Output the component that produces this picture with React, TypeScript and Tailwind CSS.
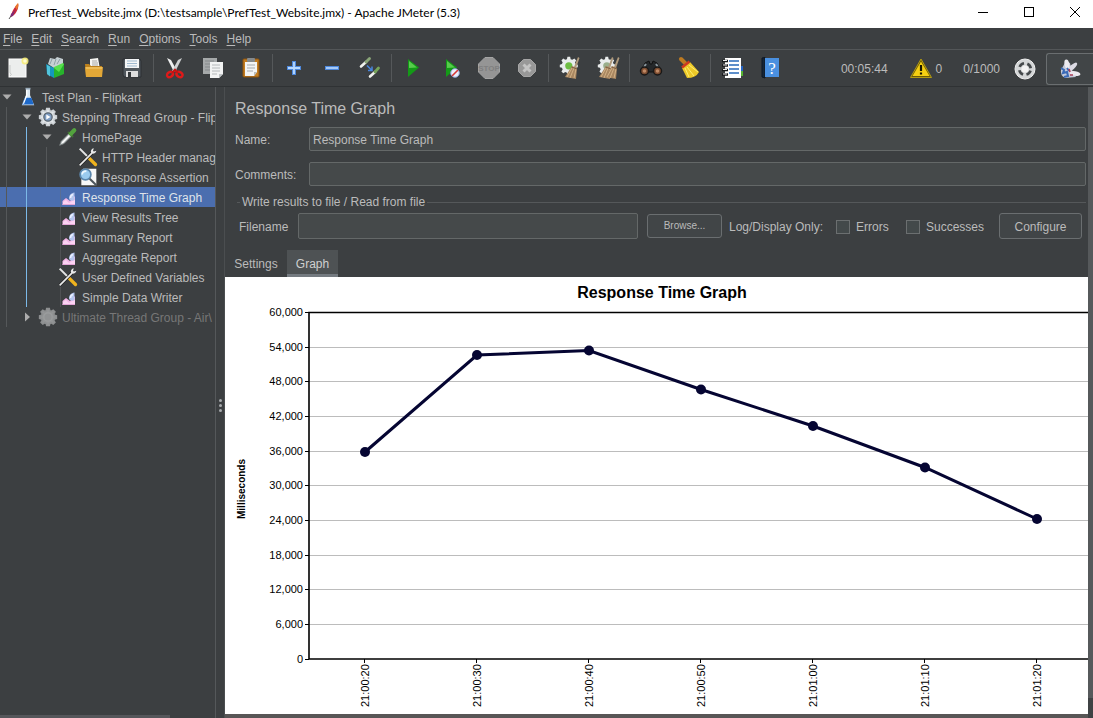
import React from "react";

type IconProps = { className?: string };
const Svg = ({ children, className = "size-6" }: { children: React.ReactNode; className?: string }) => (
  <svg viewBox="0 0 24 24" className={`shrink-0 ${className}`} fill="none" aria-hidden="true">
    {children}
  </svg>
);

const Feather = () => (
  <svg viewBox="0 0 16 20" className="h-5 w-4" fill="none" aria-hidden="true">
    <path d="M12 2 C13 3 12 9 8 13 L5 15 C5 11 8 5 12 2Z" fill="#c9283c" />
    <path d="M12 1 C13 2 12 5 11 8 L9 5 C10 3 11 2 12 1Z" fill="#e8782c" />
    <path d="M9 8 L7 14 L4 15 L5 12Z" fill="#7a2a78" />
    <path d="M5 14 L3 17" stroke="#555" />
  </svg>
);

const NewIcon = () => (
  <Svg>
    <rect x="3" y="3" width="17" height="18" fill="#eceeed" stroke="#fff" />
    <path d="M4 9v8q3 1 0 3" stroke="#c9cccb" />
    <circle cx="19" cy="5" r="3.5" fill="#f6ec7a" opacity=".9" />
    <circle cx="19" cy="5" r="1.8" fill="#fffbd0" />
  </Svg>
);
const TemplatesIcon = () => (
  <Svg>
    <path d="M4 8 L6 2 L11 3 L13 1 L19 3 L19 9 L10 12Z" fill="#c6d0d4" />
    <path d="M8 3l-2 5M12 3l-2 6M16 3l-3 5" stroke="#8fa0a7" />
    <path d="M2 8 L10 12 L10 22 L3 18Z" fill="#1597bd" />
    <path d="M3 9l3 1.5v10L3 18z" fill="#51c4dc" />
    <path d="M10 12 L20 8 L20 18 L10 22Z" fill="#27b32c" />
    <path d="M10 12l5 4 5-8-1-1-9 4z" fill="#58df4d" />
  </Svg>
);
const OpenIcon = () => (
  <Svg>
    <path d="M8 3 L16 2 L18 13 H8Z" fill="#f5f5f2" />
    <path d="M10 5h5M10 7h6M10 9h6" stroke="#a9a9a5" />
    <path d="M3 8 H7 L9 10 H20 V20 H4Z" fill="#bd811d" />
    <path d="M3 11 H21 L20 21 H4Z" fill="#e3a837" />
    <path d="M4 12H20" stroke="#f7cf77" />
  </Svg>
);
const SaveIcon = () => (
  <Svg>
    <path d="M3 3 H20 L21 5 V21 H4 L3 19Z" fill="#50575d" stroke="#2c3034" />
    <rect x="5" y="3" width="14" height="9" fill="#f4f6f7" />
    <path d="M7 5h10M7 7.5h10M7 10h10" stroke="#9eb9cf" />
    <rect x="6" y="15" width="12" height="6" fill="#dedede" />
    <rect x="8" y="16" width="3" height="5" fill="#34383b" />
  </Svg>
);
const CutIcon = () => (
  <Svg>
    <path d="M4 2 L8 4 L14 15 L11 16Z" fill="#f0f1f1" />
    <path d="M19 2 L15 4 L9 15 L12 16Z" fill="#cfd2d3" />
    <ellipse cx="7" cy="18.5" rx="3.2" ry="2.4" stroke="#de1a1a" strokeWidth="2.4" transform="rotate(-35 7 18.5)" />
    <ellipse cx="16.5" cy="18.5" rx="3.2" ry="2.4" stroke="#de1a1a" strokeWidth="2.4" transform="rotate(35 16.5 18.5)" />
    <path d="M9 17l3-3 3 3" stroke="#c41212" strokeWidth="2.4" />
  </Svg>
);
const CopyIcon = () => (
  <Svg>
    <rect x="2" y="2" width="14" height="16" fill="#a6a9aa" />
    <path d="M4 5h9M4 8h9M4 11h9M4 14h9" stroke="#85898b" />
    <path d="M9 6 H22 V18 L18 22 H9Z" fill="#f2f3f3" />
    <path d="M11 9h8M11 12h8M11 15h8M11 18h5" stroke="#b4b8ba" />
    <path d="M22 18h-4v4z" fill="#bfc3c5" />
  </Svg>
);
const PasteIcon = () => (
  <Svg>
    <rect x="4" y="3" width="16" height="18" rx="1" fill="#c27c20" stroke="#8d5410" />
    <path d="M6 6 H18 V16 L15 20 H6Z" fill="#f3f4f4" />
    <rect x="8" y="2" width="8" height="4" rx="1" fill="#868a8c" />
    <path d="M8 9h8M8 12h8M8 15h6" stroke="#a6aaad" />
    <path d="M18 16h-3v4z" fill="#babdbd" />
  </Svg>
);
const PlusIcon = () => (
  <Svg>
    <path d="M12 5v14M5 12h14" stroke="#4d88dc" strokeWidth="4" />
    <path d="M12 6v12M6 12h12" stroke="#b9daff" strokeWidth="1.8" />
  </Svg>
);
const MinusIcon = () => (
  <Svg>
    <path d="M5 12h14" stroke="#4d88dc" strokeWidth="4" />
    <path d="M6 12h12" stroke="#b0d2fa" strokeWidth="1.8" />
  </Svg>
);
const ToggleIcon = () => (
  <Svg>
    <path d="M3 10.5 L8 6" stroke="#f1f3ef" strokeWidth="2.6" strokeLinecap="round" />
    <path d="M8 6 L11.5 2.5" stroke="#8aa678" strokeWidth="2.8" strokeLinecap="round" />
    <path d="M12 20.5 L17 16" stroke="#f1f3ef" strokeWidth="2.6" strokeLinecap="round" />
    <path d="M17 16 L20.5 12" stroke="#77a45b" strokeWidth="2.8" strokeLinecap="round" />
    <path d="M9 9.5l4.5 4.5M14 10.5v4h-4" stroke="#4885dc" strokeWidth="1.5" />
  </Svg>
);
const PlayIcon = ({ blocked = false }: { blocked?: boolean }) => (
  <Svg>
    <path d="M7 3 L18 11.5 L7 21Z" fill="#149a17" />
    <path d="M8 5 L16 11.5 L8 12Z" fill="#57cc4c" />
    {blocked && (
      <>
        <circle cx="16" cy="17" r="4.3" fill="#e9eefb" stroke="#8aa2d6" />
        <path d="M13 20l6-6" stroke="#d53535" strokeWidth="1.6" />
      </>
    )}
  </Svg>
);
const StopIcon = () => (
  <Svg>
    <path d="M8 1.5 H16 L22.5 8 V16 L16 22.5 H8 L1.5 16 V8Z" fill="#959595" stroke="#a4a4a4" />
    <text x="12" y="15" textAnchor="middle" fontSize="8" fontWeight="700" fontFamily="Liberation Sans, sans-serif" fill="#808080">
      STOP
    </text>
  </Svg>
);
const ShutdownIcon = () => (
  <Svg>
    <path d="M8.5 3.5 H15.5 L20.5 8.5 V15.5 L15.5 20.5 H8.5 L3.5 15.5 V8.5Z" fill="#989898" stroke="#a6a6a6" />
    <path d="M8.5 8.5l7 7M15.5 8.5l-7 7" stroke="#c4c4c4" strokeWidth="3" />
  </Svg>
);
const gearPath =
  "M10.5 2h3l.6 2.6 1.8.8 2.3-1.4 2 2-1.4 2.3.8 1.8 2.4.6v3l-2.4.6-.8 1.8 1.4 2.3-2 2-2.3-1.4-1.8.8-.6 2.2h-3l-.6-2.2-1.8-.8-2.3 1.4-2-2 1.4-2.3-.8-1.8L2 13.7v-3l2.4-.6.8-1.8L3.8 6l2-2 2.3 1.4 1.8-.8z";
const Broom = ({ x = 0 }: { x?: number }) => (
  <g transform={`translate(${x} 0)`}>
    <path d="M20 1 L21.5 2 L18 12 L16 11Z" fill="#b09a7c" />
    <path d="M14 10 L19 12 L18 23 L7 21Z" fill="#a98761" />
    <path d="M14 12l-5 9M16 12l-4 10M18 13l-2 9" stroke="#d2b186" />
    <path d="M13.5 11l5.5 2" stroke="#806042" />
  </g>
);
const ClearIcon = ({ all = false }: { all?: boolean }) => (
  <Svg>
    <g transform="translate(0 -1) scale(.9)">
      <path d={gearPath} fill="#e9ecec" />
      <circle cx="12" cy="12" r="4" fill={all ? "#9aae8c" : "#6ebd43"} />
    </g>
    {all && <Broom x={-4} />}
    <Broom x={all ? 2 : 0} />
  </Svg>
);
const SearchIcon = () => (
  <Svg>
    <path d="M6 7 L10 5 L11 8 H13 L14 5 L18 7 L22 15 L14 16 H10 L2 15Z" fill="#25282a" stroke="#111" />
    <path d="M5 11l2-3M19 11l-2-3" stroke="#8a969d" strokeWidth="2" />
    <circle cx="5.5" cy="15" r="4" fill="#7c4c30" stroke="#181818" strokeWidth="1.5" />
    <circle cx="18.5" cy="15" r="4" fill="#7c4c30" stroke="#181818" strokeWidth="1.5" />
    <circle cx="5.5" cy="15" r="1.8" fill="#c08a66" />
    <circle cx="18.5" cy="15" r="1.8" fill="#c08a66" />
  </Svg>
);
const ResetIcon = () => (
  <Svg>
    <path d="M4 3 L9 8" stroke="#bd7a21" strokeWidth="4" strokeLinecap="round" />
    <path d="M5 12 L13 6 L22 16 Q19 22 10 22Z" fill="#edc928" />
    <path d="M8 12l4 9M10 11l7 9M12 9l9 7" stroke="#fff06f" />
    <path d="M5 11.5 L12.5 5.5" stroke="#ce3b20" strokeWidth="2.6" />
  </Svg>
);
const LogIcon = () => (
  <Svg>
    <rect x="5" y="2" width="16" height="20" fill="#fff" />
    <path d="M9 5h10M9 9h10M9 13h10M9 17h10" stroke="#286ab9" strokeWidth="1.5" />
    <path d="M2 5h6M2 9.5h6M2 14h6M2 18.5h6" stroke="#17191b" strokeWidth="2.4" />
    <path d="M3 4.5h4M3 9h4M3 13.5h4M3 18h4" stroke="#e8e8e8" />
    <path d="M21 10h2v5h-2z" fill="#2464c4" />
    <path d="M21 15h2v5h-2z" fill="#54b332" />
  </Svg>
);
const HelpIcon = () => (
  <Svg>
    <path d="M4 2 L7 1.5 V22 L4 21Z" fill="#172637" stroke="#0d1724" />
    <rect x="7" y="2" width="14" height="19" fill="#4a90e0" />
    <text x="14" y="18" textAnchor="middle" fontSize="17" fontFamily="Liberation Serif, serif" fill="#fff">
      ?
    </text>
  </Svg>
);
const WarningIcon = () => (
  <Svg>
    <path d="M12 2 L22.5 20.5 H1.5Z" fill="#6b5a05" stroke="#b29a14" strokeLinejoin="round" />
    <path d="M12 4.5 L20.5 19 H3.5Z" fill="#f5cf12" />
    <path d="M12 8v6M12 15.5v2" stroke="#181600" strokeWidth="2.2" />
  </Svg>
);
const ThreadsIcon = () => (
  <Svg>
    <circle cx="12" cy="12" r="10" fill="#d4d6d7" stroke="#f0f0f0" />
    <circle cx="12" cy="12" r="5.8" stroke="#45494b" strokeWidth="2.6" strokeDasharray="5.6 3.51" strokeDashoffset="-1.755" />
    <circle cx="12" cy="12" r="3.5" fill="#f3f3f3" />
  </Svg>
);
const PluginsIcon = () => (
  <Svg>
    <path d="M3 13 Q2 18 7 21 L18 20 L15 15 L13 11 L12 6 L8 4Z" fill="#c3c9da" />
    <ellipse cx="9" cy="7.5" rx="2.4" ry="5" fill="#eceaf0" transform="rotate(-12 9 7.5)" />
    <ellipse cx="14.5" cy="10" rx="2.3" ry="6" fill="#dcdbe4" transform="rotate(48 14.5 10)" />
    <ellipse cx="17" cy="16.5" rx="2.3" ry="5.5" fill="#ece9ef" transform="rotate(100 17 16.5)" />
    <path d="M3 11l3 2-1 3 4-1 1 4-4 1M9 11l2 3" stroke="#3b6bb8" strokeWidth="2" />
    <path d="M11 12l1 3M12 18h3" stroke="#ad3f58" strokeWidth="1.6" />
  </Svg>
);

const FlaskIcon = () => (
  <Svg className="size-5">
    <path d="M9.5 2h5v8l5 12H4.5l5-12z" fill="#dce8f2" />
    <path d="M8 13h8l3 8H5z" fill="#1d69ca" />
    <path d="M10.5 3v7l-4 10" stroke="#fff" strokeWidth="1.5" />
    <path d="M9 2h6" stroke="#97a9b8" strokeWidth="2" />
  </Svg>
);
const GearIcon = ({ dim = false }: { dim?: boolean }) => (
  <Svg className="size-5">
    <path d={gearPath} fill={dim ? "#939596" : "#e3e7ea"} stroke={dim ? "#8d8f90" : "#cdd2d6"} strokeWidth="2" />
    <circle cx="12" cy="12" r="5" fill={dim ? "#909293" : "#7d9dc4"} stroke={dim ? "#9b9d9e" : "#596570"} strokeWidth="1.5" />
    {!dim && <path d="M10 9l5 3-5 3z" fill="#fff" />}
  </Svg>
);
const DropperIcon = () => (
  <Svg className="size-5">
    <path d="M2 22 L4 17 L13 8 L16 11 L7 20Z" fill="#cfd5d5" stroke="#777e7e" />
    <path d="M5 19l9-9" stroke="#fff" strokeWidth="1.5" />
    <path d="M12 6l6 6" stroke="#426f35" strokeWidth="2.6" />
    <path d="M15.5 8l4-4" stroke="#53a33e" strokeWidth="5" strokeLinecap="round" />
  </Svg>
);
const ToolsIcon = () => (
  <Svg className="size-5">
    <path d="M2 2l12 12" stroke="#e5e6e6" strokeWidth="2.4" />
    <path d="M13 13l8 8" stroke="#efb31e" strokeWidth="4" strokeLinecap="round" />
    <path d="M2 22 L17 7" stroke="#222" strokeWidth="3.6" />
    <path d="M2 22 L17 7" stroke="#e9eaea" strokeWidth="2" />
    <path d="M19 1.5a4 4 0 0 0-3 6 4 4 0 0 0 6-3l-3 1-1-1z" fill="#e9eaea" />
  </Svg>
);
const AssertionIcon = () => (
  <Svg className="size-5">
    <path d="M6 2h16v20H4V8z" fill="#f8f8f8" />
    <circle cx="9" cy="9" r="6.5" fill="#9acbef" stroke="#5b87ad" strokeWidth="2" />
    <path d="M5 9q0-4 5-4" stroke="#eef8ff" strokeWidth="2" />
    <path d="M14 14l8 8" stroke="#4c555c" strokeWidth="2.5" />
  </Svg>
);
const ReportIcon = () => (
  <svg viewBox="0 0 20 20" className="size-5 shrink-0" fill="none" aria-hidden="true">
    <path d="M2.5 0v20" stroke="#6b6e70" strokeOpacity=".4" />
    <path d="M4.5 18V14L8 11L12 14L17 9V18Z" fill="#f2b4e6" />
    <path d="M5 15l3-2 3 3 3-2 3-1v5H5z" fill="#fbd3f3" />
    <path d="M11 12C11 8 13 6 16.5 5.5V13Q13 15 11 12Z" fill="#b4c5ee" />
    <path d="M12.5 11q0-3 2.5-3.5" stroke="#eaf0ff" strokeWidth="1.5" />
    <path d="M4.5 17.5H17" stroke="#e5a6d8" />
  </svg>
);

type Row = {
  label: string;
  depth: number;
  icon: (p: IconProps) => React.ReactElement;
  state?: "open" | "closed";
  selected?: boolean;
  disabled?: boolean;
  guides: ("line" | "active")[];
};
const DimGear = () => <GearIcon dim />;
const rows: Row[] = [
  { label: "Test Plan - Flipkart", depth: 0, icon: FlaskIcon, state: "open", guides: [] },
  { label: "Stepping Thread Group - Flip", depth: 1, icon: () => <GearIcon />, state: "open", guides: ["line"] },
  { label: "HomePage", depth: 2, icon: DropperIcon, state: "open", guides: ["line", "active"] },
  { label: "HTTP Header manag", depth: 3, icon: ToolsIcon, guides: ["line", "active", "line"] },
  { label: "Response Assertion", depth: 3, icon: AssertionIcon, guides: ["line", "active", "line"] },
  { label: "Response Time Graph", depth: 2, icon: ReportIcon, selected: true, guides: ["line", "active"] },
  { label: "View Results Tree", depth: 2, icon: ReportIcon, guides: ["line", "active"] },
  { label: "Summary Report", depth: 2, icon: ReportIcon, guides: ["line", "active"] },
  { label: "Aggregate Report", depth: 2, icon: ReportIcon, guides: ["line", "active"] },
  { label: "User Defined Variables", depth: 2, icon: ToolsIcon, guides: ["line", "active"] },
  { label: "Simple Data Writer", depth: 2, icon: ReportIcon, guides: ["line", "active"] },
  { label: "Ultimate Thread Group - Air\\", depth: 1, icon: DimGear, state: "closed", disabled: true, guides: ["line"] },
];
const guideColor = { line: "bg-[#55585a]", active: "bg-[#7cb9e8]" };

function TreeRow({ row }: { row: Row }) {
  const Icon = row.icon;
  return (
    <li
      role="treeitem"
      aria-level={row.depth + 1}
      aria-selected={!!row.selected}
      className={`flex h-5 items-center ${row.selected ? "bg-[#4b6eaf] text-[#dfe3ea]" : row.disabled ? "text-[#777]" : ""}`}
    >
      {row.guides.map((g, i) => (
        <span key={i} className="flex h-full w-5 shrink-0 pl-1.5">
          <span className={`w-px ${guideColor[g]}`} />
        </span>
      ))}
      <svg viewBox="0 0 14 14" className="mr-1 size-3.5 shrink-0" aria-hidden="true">
        {row.state === "open" && <path d="M2.5 4.5h9l-4.5 5z" fill="#adadad" />}
        {row.state === "closed" && <path d="M5 2.5v9l5-4.5z" fill="#adadad" />}
      </svg>
      <Icon />
      <span className="pt-0.5 pl-1 whitespace-nowrap">{row.label}</span>
    </li>
  );
}

const toolGroups: { name: string; icon: React.ReactNode }[][] = [
  [
    { name: "New", icon: <NewIcon /> },
    { name: "Templates", icon: <TemplatesIcon /> },
    { name: "Open", icon: <OpenIcon /> },
    { name: "Save", icon: <SaveIcon /> },
  ],
  [
    { name: "Cut", icon: <CutIcon /> },
    { name: "Copy", icon: <CopyIcon /> },
    { name: "Paste", icon: <PasteIcon /> },
  ],
  [
    { name: "Expand All", icon: <PlusIcon /> },
    { name: "Collapse All", icon: <MinusIcon /> },
    { name: "Toggle", icon: <ToggleIcon /> },
  ],
  [
    { name: "Start", icon: <PlayIcon /> },
    { name: "Start no pauses", icon: <PlayIcon blocked /> },
    { name: "Stop", icon: <StopIcon /> },
    { name: "Shutdown", icon: <ShutdownIcon /> },
  ],
  [
    { name: "Clear", icon: <ClearIcon /> },
    { name: "Clear All", icon: <ClearIcon all /> },
  ],
  [
    { name: "Search", icon: <SearchIcon /> },
    { name: "Reset Search", icon: <ResetIcon /> },
  ],
  [
    { name: "Function Helper", icon: <LogIcon /> },
    { name: "Help", icon: <HelpIcon /> },
  ],
];

const samples = [
  { time: "21:00:20", x: 140, y: 175 },
  { time: "21:00:30", x: 252, y: 78 },
  { time: "21:00:40", x: 364, y: 73.5 },
  { time: "21:00:50", x: 476, y: 112.5 },
  { time: "21:01:00", x: 588, y: 149 },
  { time: "21:01:10", x: 700, y: 190.5 },
  { time: "21:01:20", x: 812, y: 242 },
];
const yLabels = ["60,000", "54,000", "48,000", "42,000", "36,000", "30,000", "24,000", "18,000", "12,000", "6,000", "0"];

function Chart() {
  return (
    <svg
      viewBox="0 0 863 437"
      preserveAspectRatio="xMinYMin meet"
      className="h-full w-full"
      fontFamily="Liberation Sans, sans-serif"
      role="img"
      aria-label="Response Time Graph"
    >
      <text x="437" y="21" textAnchor="middle" fontSize="16" fontWeight="700">
        Response Time Graph
      </text>
      <text transform="translate(20 212) rotate(-90)" textAnchor="middle" fontSize="10" fontWeight="700">
        Milliseconds
      </text>
      {yLabels.map((label, i) => {
        const y = Math.round(35 + i * 34.65) + 0.5;
        return (
          <g key={label}>
            {i > 0 && i < 10 && <path d={`M84 ${y}H863`} stroke="#bcbcbc" />}
            <path d={`M80 ${y}H84`} stroke="#000" />
            <text x="78" y={y + 3.5} textAnchor="end" fontSize="11">
              {label}
            </text>
          </g>
        );
      })}
      <path d="M863 35.5H84V382H863" fill="none" stroke="#000" strokeWidth="1.6" />
      {samples.map((s) => (
        <g key={s.time}>
          <path d={`M${s.x - 0.5} 382v4`} stroke="#000" />
          <text transform={`translate(${s.x + 4} 430) rotate(-90)`} fontSize="11">
            {s.time}
          </text>
        </g>
      ))}
      <polyline points={samples.map((s) => `${s.x},${s.y}`).join(" ")} fill="none" stroke="#050532" strokeWidth="3" />
      {samples.map((s) => (
        <circle key={s.time} cx={s.x} cy={s.y} r="5" fill="#050532" />
      ))}
    </svg>
  );
}

const field = "min-w-0 rounded-[2px] border border-[#646868] bg-[#45494a] px-[3px] outline-none";
const button = "rounded-[3px] border border-[#6a6e70] bg-[#414547]";
const check = "size-3.5 appearance-none border border-[#6b6f70] bg-[#43494a]";

export default function App() {
  return (
    <div className="flex h-screen flex-col overflow-hidden bg-[#3c3f41] font-['Liberation_Sans',Arial,sans-serif] text-[12px] leading-5 text-[#bbbbbb]">
      <header className="flex h-7 shrink-0 items-center bg-white text-black">
        <span className="flex w-7 justify-center pb-1">
          <Feather />
        </span>
        <h1 className="flex-1 truncate pb-0.5 font-[Lato,'Open_Sans',sans-serif]">
          PrefTest_Website.jmx (D:\testsample\PrefTest_Website.jmx) - Apache JMeter (5.3)
        </h1>
        <div className="flex gap-2.5 pb-1">
          <button aria-label="Minimize" className="flex w-9 justify-center">
            <svg viewBox="0 0 10 10" className="size-2.5" stroke="#000">
              <path d="M0 5.5h10" />
            </svg>
          </button>
          <button aria-label="Maximize" className="flex w-9 justify-center">
            <svg viewBox="0 0 10 10" className="size-2.5" stroke="#000" fill="none">
              <rect x=".5" y=".5" width="9" height="9" />
            </svg>
          </button>
          <button aria-label="Close" className="flex w-9 justify-center">
            <svg viewBox="0 0 10 10" className="size-2.5" stroke="#000">
              <path d="M0 0l10 10M10 0L0 10" />
            </svg>
          </button>
        </div>
      </header>

      <nav className="flex h-[22px] shrink-0 items-center gap-[9px] border-b border-[#535658] pl-[3px]">
        {["File", "Edit", "Search", "Run", "Options", "Tools", "Help"].map((m) => (
          <button key={m}>
            <span className="underline underline-offset-2">{m[0]}</span>
            {m.slice(1)}
          </button>
        ))}
      </nav>

      <div className="flex h-[37px] shrink-0 items-center border-b border-[#2f3234]">
        <div className="-ml-px flex items-center">
          {toolGroups.map((group, i) => (
            <React.Fragment key={i}>
              {i > 0 && <span className="mx-0.5 h-7 w-px bg-[#55585a]" />}
              {group.map((t) => (
                <button key={t.name} aria-label={t.name} className="flex w-[38px] justify-center">
                  {t.icon}
                </button>
              ))}
            </React.Fragment>
          ))}
        </div>
        <div className="ml-auto flex items-center pt-px">
          <span>00:05:44</span>
          <span className="ml-[21px] flex items-center gap-[3px]">
            <WarningIcon />0
          </span>
          <span className="ml-[21px]">0/1000</span>
          <span className="ml-[13px]">
            <ThreadsIcon />
          </span>
          <button
            aria-label="Plugins"
            className="ml-[9px] flex h-8 w-[47px] items-center justify-center rounded-l-[3px] border border-r-0 border-[#6a6e70] bg-[#414547]"
          >
            <PluginsIcon />
          </button>
        </div>
      </div>

      <div className="flex min-h-0 flex-1">
        <aside className="flex w-[216px] shrink-0 flex-col overflow-hidden border-r border-[#55585a]">
          <ul role="tree" className="flex-1">
            {rows.map((r) => (
              <TreeRow key={r.label} row={r} />
            ))}
          </ul>
          <div className="h-[3px] w-[170px] bg-[#55565a]" />
        </aside>
        <div className="flex w-[9px] shrink-0 flex-col items-center justify-center gap-0.5 border-r border-[#4b4e50] pt-1.5">
          {[0, 1, 2].map((d) => (
            <span key={d} className="size-[3px] rounded-full bg-[#a8abad]" />
          ))}
        </div>

        <main className="flex min-w-0 flex-1 flex-col">
          <h2 className="pt-2.5 pl-2.5 text-base leading-6">Response Time Graph</h2>
          <div className="mt-1.5 grid grid-cols-[74px_1fr] items-center gap-y-[11px] pr-0.5 pl-2.5">
            <label htmlFor="name" className="pt-0.5">
              Name:
            </label>
            <input id="name" defaultValue="Response Time Graph" className={`h-6 pt-0.5 ${field}`} />
            <label htmlFor="comments" className="pt-0.5">
              Comments:
            </label>
            <input id="comments" className={`h-6 ${field}`} />
          </div>
          <section>
            <h3 className="mt-1.5 flex items-center gap-0.5 pr-0.5 pl-3">
              <span className="h-px w-[3px] bg-[#55585a]" />
              <span>Write results to file / Read from file</span>
              <span className="h-px flex-1 bg-[#55585a]" />
            </h3>
            <div className="flex h-[28px] items-center pr-1.5 pl-3.5">
              <label htmlFor="filename" className="w-[59px] shrink-0 pt-0.5">
                Filename
              </label>
              <input id="filename" className={`h-[26px] flex-1 ${field}`} />
              <button className={`ml-[9px] h-6 w-[75px] text-[10px] ${button}`}>Browse...</button>
              <span className="ml-[7px] w-[107px] pt-0.5 whitespace-nowrap">Log/Display Only:</span>
              <label className="flex w-[70px] items-center gap-1.5 pt-0.5">
                <input type="checkbox" className={check} />
                Errors
              </label>
              <label className="flex w-[93px] items-center gap-1.5 pt-0.5">
                <input type="checkbox" className={check} />
                Successes
              </label>
              <button className={`h-[26px] w-[83px] pt-0.5 ${button}`}>Configure</button>
            </div>
          </section>
          <div role="tablist" className="mt-2.5 flex h-[27px]">
            <button role="tab" aria-selected="false" className="w-[62px]">
              Settings
            </button>
            <button role="tab" aria-selected="true" className="w-[51px] border-b-[3px] border-[#747a80] bg-[#4e5254] pt-[3px] text-[#d0d0d0]">
              Graph
            </button>
          </div>
          <div className="min-h-0 flex-1 overflow-hidden bg-white text-black">
            <Chart />
          </div>
          <div className="h-1 shrink-0 bg-[#585656]" />
        </main>
        <div className="flex w-[5px] shrink-0 flex-col">
          <div className="flex-1 bg-[#56595b]" />
          <div className="h-5 bg-[#3f4244]" />
        </div>
      </div>
    </div>
  );
}
